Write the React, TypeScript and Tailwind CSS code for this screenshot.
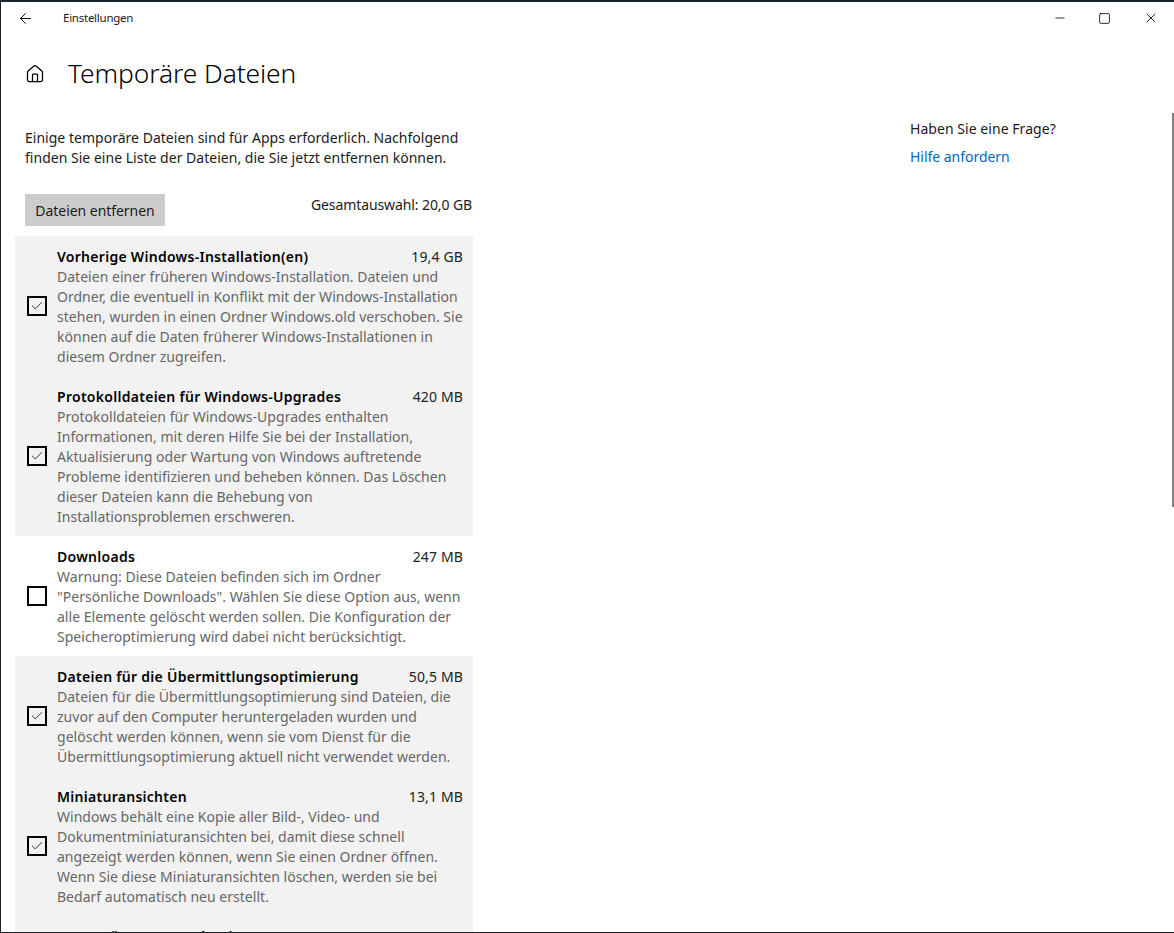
import { ArrowLeft, Check, Home, Minus, Square, X } from 'lucide-react';

type Item = { title: string; size: string; lines: string[]; checked: boolean };

const groups: { shaded: boolean; items: Item[] }[] = [
  {
    shaded: true,
    items: [
      {
        title: 'Vorherige Windows-Installation(en)',
        size: '19,4 GB',
        checked: true,
        lines: [
          'Dateien einer früheren Windows-Installation. Dateien und',
          'Ordner, die eventuell in Konflikt mit der Windows-Installation',
          'stehen, wurden in einen Ordner Windows.old verschoben. Sie',
          'können auf die Daten früherer Windows-Installationen in',
          'diesem Ordner zugreifen.',
        ],
      },
      {
        title: 'Protokolldateien für Windows-Upgrades',
        size: '420 MB',
        checked: true,
        lines: [
          'Protokolldateien für Windows-Upgrades enthalten',
          'Informationen, mit deren Hilfe Sie bei der Installation,',
          'Aktualisierung oder Wartung von Windows auftretende',
          'Probleme identifizieren und beheben können. Das Löschen',
          'dieser Dateien kann die Behebung von',
          'Installationsproblemen erschweren.',
        ],
      },
    ],
  },
  {
    shaded: false,
    items: [
      {
        title: 'Downloads',
        size: '247 MB',
        checked: false,
        lines: [
          'Warnung: Diese Dateien befinden sich im Ordner',
          '"Persönliche Downloads". Wählen Sie diese Option aus, wenn',
          'alle Elemente gelöscht werden sollen. Die Konfiguration der',
          'Speicheroptimierung wird dabei nicht berücksichtigt.',
        ],
      },
    ],
  },
  {
    shaded: true,
    items: [
      {
        title: 'Dateien für die Übermittlungsoptimierung',
        size: '50,5 MB',
        checked: true,
        lines: [
          'Dateien für die Übermittlungsoptimierung sind Dateien, die',
          'zuvor auf den Computer heruntergeladen wurden und',
          'gelöscht werden können, wenn sie vom Dienst für die',
          'Übermittlungsoptimierung aktuell nicht verwendet werden.',
        ],
      },
      {
        title: 'Miniaturansichten',
        size: '13,1 MB',
        checked: true,
        lines: [
          'Windows behält eine Kopie aller Bild-, Video- und',
          'Dokumentminiaturansichten bei, damit diese schnell',
          'angezeigt werden können, wenn Sie einen Ordner öffnen.',
          'Wenn Sie diese Miniaturansichten löschen, werden sie bei',
          'Bedarf automatisch neu erstellt.',
        ],
      },
      {
        title: 'Temporäre Internetdateien',
        size: '10,2 MB',
        checked: true,
        lines: ['Windows Defender Antivirus'],
      },
    ],
  },
];

function Row({ item }: { item: Item }) {
  return (
    <div className="flex items-center pl-3 pr-2.5 mb-5 last:mb-0">
      <div className="w-5 h-5 border-2 border-black flex items-center justify-center shrink-0">
        {item.checked && <Check size={14} strokeWidth={1.3} className="text-black" />}
      </div>
      <div className="ml-2.5 flex-1 min-w-0 translate-y-px leading-5 text-[14px] whitespace-nowrap">
        <div className="flex justify-between text-black">
          <span className="font-semibold tracking-[0.28px]">{item.title}</span>
          <span className="text-[#222] tracking-[0.15px]">{item.size}</span>
        </div>
        {item.lines.map((line) => (
          <div key={line} className="text-[#666] tracking-[0.02px]">{line}</div>
        ))}
      </div>
    </div>
  );
}

export default function App() {
  return (
    <div className="h-[933px] overflow-hidden bg-white border-t-2 border-l border-b border-[#1b2530] font-['Noto_Sans',sans-serif] text-[#1a1a1a] relative">
      {/* title bar */}
      <div className="h-8 flex items-center">
        <ArrowLeft size={17} strokeWidth={1.4} className="ml-[16px] text-black" />
        <span className="ml-[29px] text-[11.5px] tracking-[-0.25px]">Einstellungen</span>
        <div className="ml-auto flex items-center text-black">
          <Minus size={14} strokeWidth={1.4} className="mr-[31px]" />
          <Square size={13} strokeWidth={1.5} className="mr-[32px]" />
          <X size={16} strokeWidth={1.3} className="mr-[15px]" />
        </div>
      </div>

      <div className="flex">
        <div className="w-[472px] shrink-0">
          {/* heading */}
          <div className="flex items-center mt-5 pl-[24px] h-10">
            <Home size={20} strokeWidth={1.5} className="text-black" />
            <h1 className="ml-[23px] text-[26.4px] font-light tracking-[-0.1px] text-black">Temporäre Dateien</h1>
          </div>

          <p className="mt-[34px] ml-6 text-[14px] leading-5 whitespace-nowrap tracking-[0.02px]">
            Einige temporäre Dateien sind für Apps erforderlich. Nachfolgend
            <br />
            finden Sie eine Liste der Dateien, die Sie jetzt entfernen können.
          </p>

          <div className="flex justify-between items-start mt-[26px] ml-6">
            <button className="w-[140px] h-8 bg-[#cccccc] text-[14px] tracking-[-0.05px] text-[#1a1a1a]">Dateien entfernen</button>
            <span className="text-[14px] leading-5 mt-[1px] mr-[1px] tracking-[-0.1px]">Gesamtauswahl: 20,0 GB</span>
          </div>

          <div className="mt-2.5 ml-3.5">
            {groups.map((group, i) => (
              <div key={i} className={group.shaded ? 'bg-[#f2f2f2] py-2.5' : 'bg-white py-2.5'}>
                {group.items.map((item) => (
                  <Row key={item.title} item={item} />
                ))}
              </div>
            ))}
          </div>
        </div>

        {/* help column */}
        <div className="ml-[437px] mt-[85px] text-[14px] leading-5 whitespace-nowrap">
          <div className="tracking-[0.05px]">Haben Sie eine Frage?</div>
          <a className="block mt-2 text-[#0067c0] tracking-[-0.03px]">Hilfe anfordern</a>
        </div>
      </div>

      {/* scrollbar thumb */}
      <div className="absolute right-0 top-[111px] w-[2px] h-[394px] bg-[#808080]" />
    </div>
  );
}
